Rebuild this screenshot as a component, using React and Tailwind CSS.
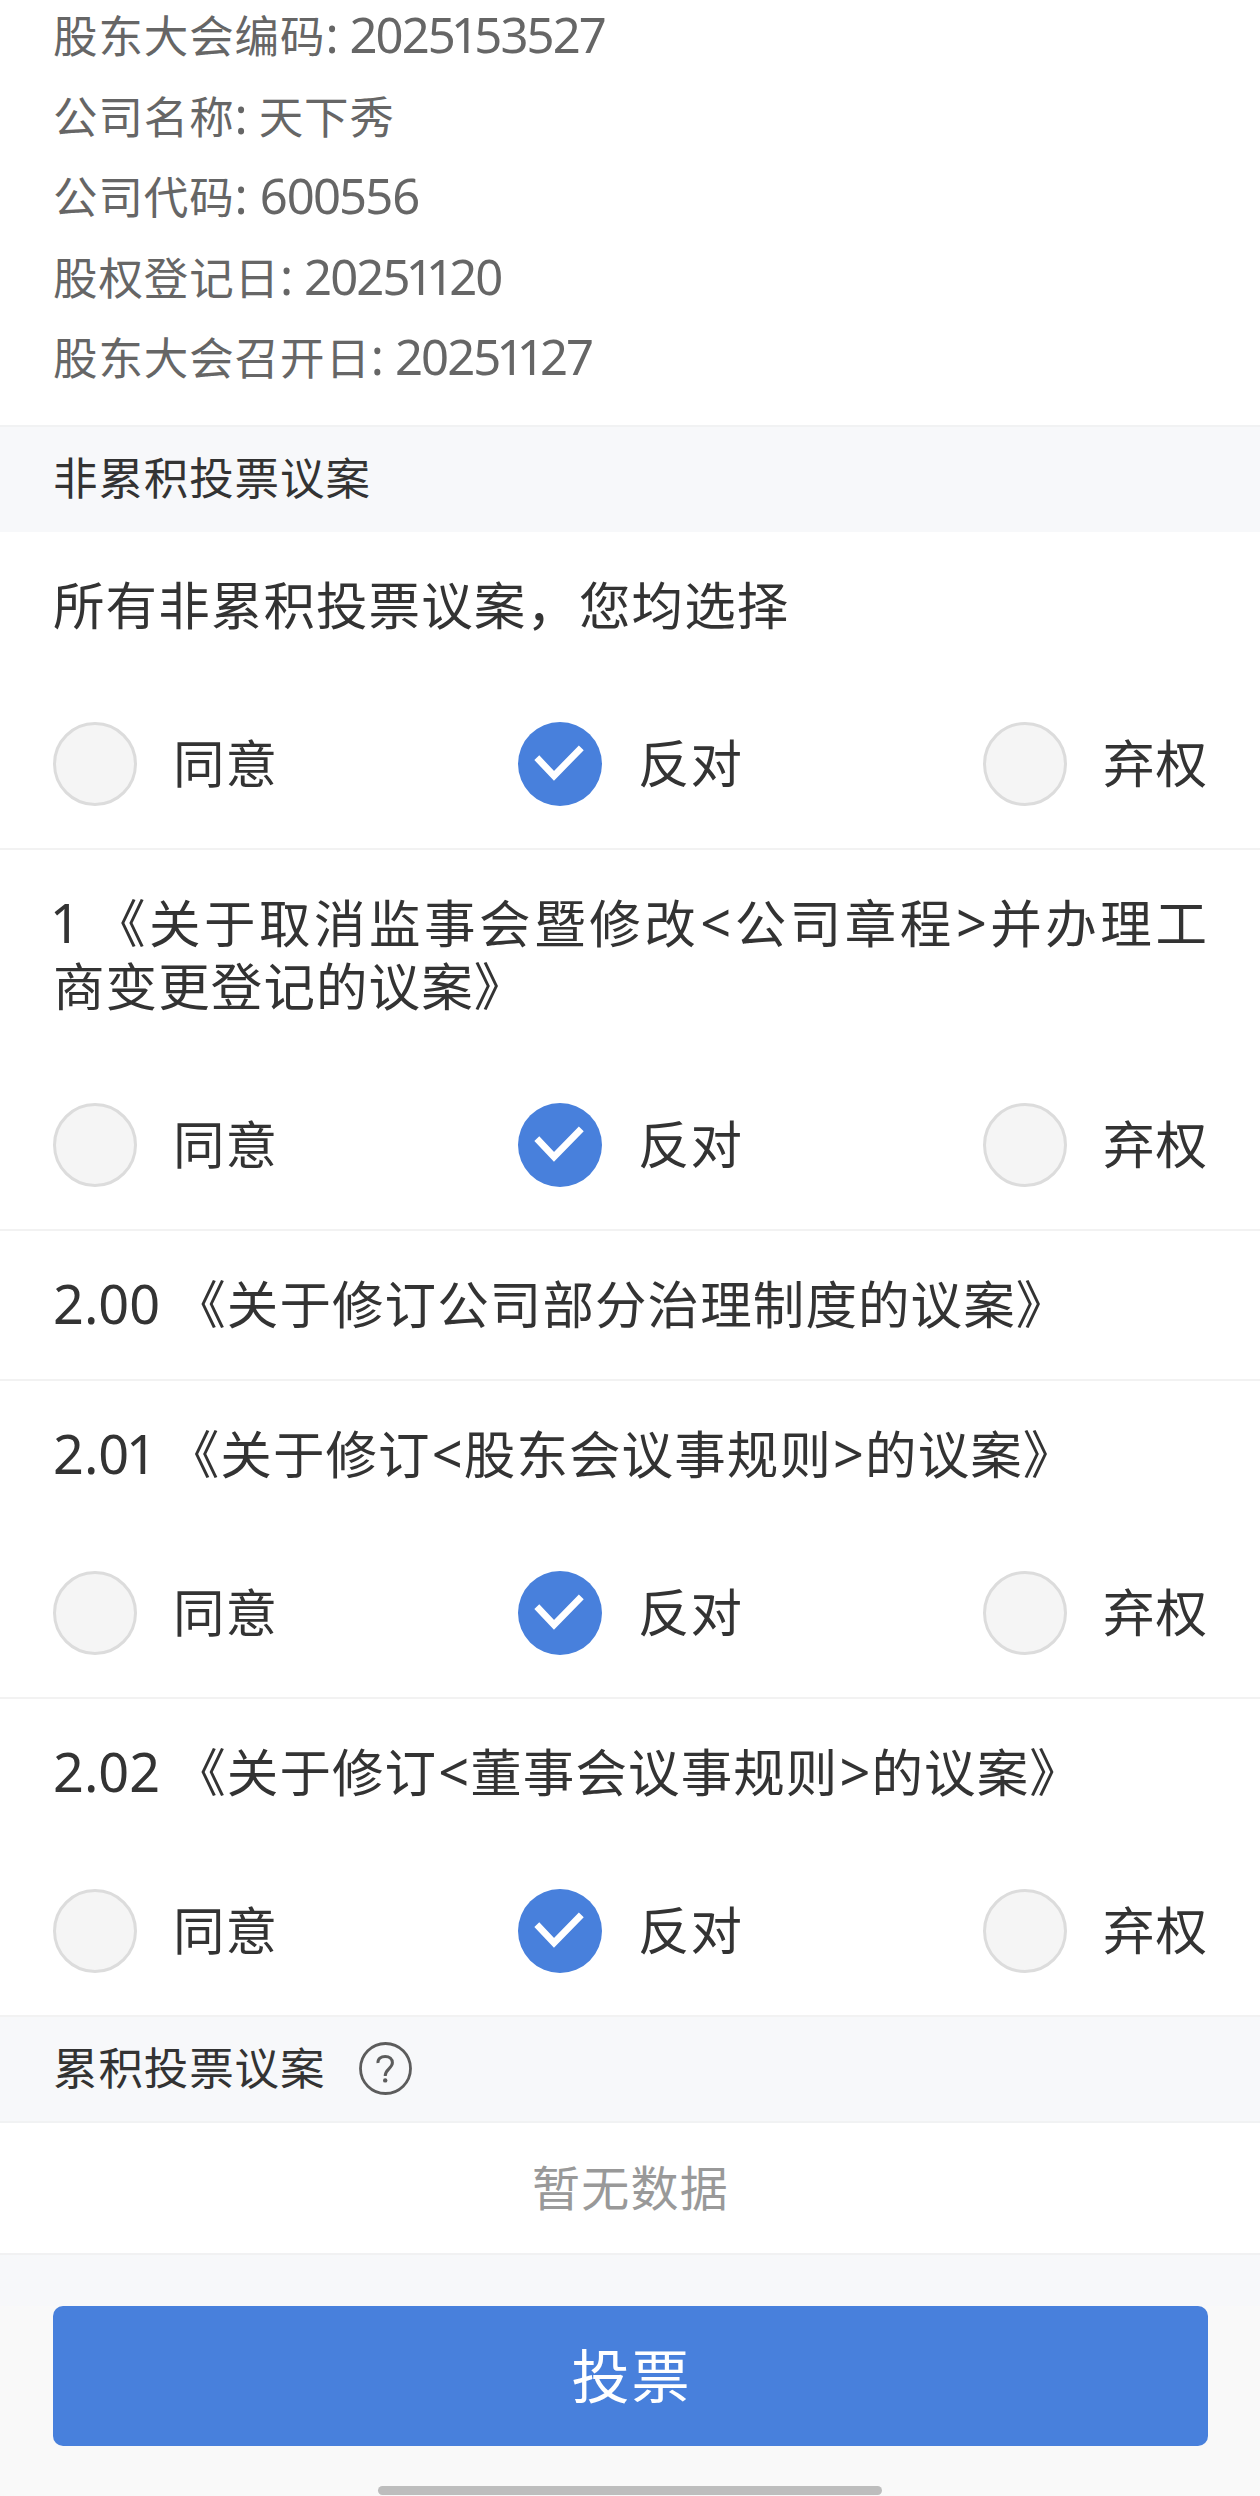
import React from "react";

const meetingInfo = [
  { label: "股东大会编码", value: "2025153527" },
  { label: "公司名称", value: "天下秀" },
  { label: "公司代码", value: "600556" },
  { label: "股权登记日", value: "20251120" },
  { label: "股东大会召开日", value: "20251127" },
];

// One entry in `lines` per printed line, every line but the last is justified
const proposals = [
  { id: "all", lines: ["所有非累积投票议案，您均选择"], choice: "反对" },
  {
    id: "1",
    lines: ["1 《关于取消监事会暨修改<公司章程>并办理工", "商变更登记的议案》"],
    choice: "反对",
  },
  { id: "2.00", lines: ["2.00 《关于修订公司部分治理制度的议案》"] },
  { id: "2.01", lines: ["2.01 《关于修订<股东会议事规则>的议案》"], choice: "反对" },
  { id: "2.02", lines: ["2.02 《关于修订<董事会议事规则>的议案》"], choice: "反对" },
];

const options = ["同意", "反对", "弃权"];

const charSpacing = {
  1: "-mx-[0.06em]",
  6: "mx-[0.02em]",
  "<": "mx-[0.02em]",
  ">": "mx-[0.02em]",
};

function MixedText({ text, latinClass }) {
  return text.split(/([\x20-\x7e]+)/).map((part, i) => {
    if (i % 2 === 0) return part;
    return (
      <span key={i} className={latinClass}>
        {part.split(/([16<>])/).map((s, j) =>
          charSpacing[s] ? (
            <span key={j} className={charSpacing[s]}>
              {s}
            </span>
          ) : (
            s
          )
        )}
      </span>
    );
  });
}

function Radio({ checked }) {
  if (!checked) {
    return (
      <span className="size-[84px] rounded-full border-3 border-[#dcdcdc] bg-[#f5f5f5]" />
    );
  }
  return (
    <svg viewBox="0 0 84 84" className="size-[84px]" fill="none">
      <circle cx="42" cy="42" r="42" fill="#4880dc" />
      <path d="M18.8 35.7L36 53.8L63.3 25.8" stroke="#fff" strokeWidth="6.8" />
    </svg>
  );
}

function Proposal({ lines, choice }) {
  return (
    <div className="border-b-2 border-[#f2f2f2] pt-[39px] pr-[52px] pl-[53px]">
      <div className="pb-[46px] text-[51.5px] leading-[63px] tracking-[1.1px]">
        {lines.map((line, i) => (
          <div
            key={line}
            className={
              i < lines.length - 1
                ? "h-[63px] [text-align-last:justify]"
                : "h-[63px] whitespace-nowrap"
            }
          >
            <MixedText
              text={line}
              latinClass="font-['Noto_Sans'] text-[54px] leading-none tracking-[0px]"
            />
          </div>
        ))}
      </div>
      {choice && (
        <div className="flex justify-between pt-[42px] pb-[42px]">
          {options.map((option) => (
            <div key={option} className="flex h-[84px] items-center gap-[36px]">
              <Radio checked={option === choice} />
              <span className="pb-[6px] text-[51.5px] leading-none tracking-[0.95px]">
                {option}
              </span>
            </div>
          ))}
        </div>
      )}
    </div>
  );
}

function HelpIcon() {
  return (
    <svg viewBox="0 0 53 53" className="mb-[2px] size-[53px]" fill="none">
      <circle cx="26.5" cy="26.5" r="25" stroke="#5c5c5c" strokeWidth="2.8" />
      <path
        d="M19 21C18.6 16.8 22 14.4 26.2 14.4S33.4 16.8 33.4 20.8C33.4 26.4 26.2 27 26.2 34"
        stroke="#5c5c5c"
        strokeWidth="3"
      />
      <circle cx="26.2" cy="38.4" r="2.2" fill="#5c5c5c" />
    </svg>
  );
}

function App() {
  return (
    <div className="flex h-[2496px] w-[1260px] flex-col overflow-hidden bg-white font-['Noto_Sans_CJK_SC',sans-serif] text-[#333]">
      <div className="h-[425px] shrink-0 px-[53px] text-[#666]">
        {meetingInfo.map(({ label, value }) => (
          <div
            key={label}
            className="h-[80.6px] text-[44.5px] leading-[67px] tracking-[0.9px] whitespace-nowrap"
          >
            <MixedText
              text={`${label}: ${value}`}
              latinClass="font-['Noto_Sans'] text-[49px] leading-none tracking-[-1.9px] [word-spacing:2px]"
            />
          </div>
        ))}
      </div>

      <div className="flex h-[107px] shrink-0 items-center border-t-2 border-[#f1f2f3] bg-[#f7f8fa] px-[53px] pb-[6px] text-[44.5px] tracking-[0.9px]">
        非累积投票议案
      </div>

      {proposals.map((p) => (
        <Proposal key={p.id} lines={p.lines} choice={p.choice} />
      ))}

      <div className="flex h-[106px] shrink-0 items-center gap-[34px] border-b-2 border-[#f1f2f3] bg-[#f7f8fa] px-[53px] text-[44.5px] tracking-[0.9px]">
        <span className="pb-[6px]">累积投票议案</span>
        <HelpIcon />
      </div>
      <div className="flex h-[132px] shrink-0 items-center justify-center border-b-2 border-[#f1f1f2] pb-[6px] pl-[1px] text-[48px] tracking-[1.2px] text-[#999]">
        暂无数据
      </div>
      <div className="h-[51px] shrink-0 bg-[#f7f8fa]" />

      {/* Bottom bar with the home indicator */}
      <div className="flex grow flex-col items-center bg-[#f9f9f9]">
        <button className="h-[140px] w-[1155px] rounded-[10px] bg-[#4880dc] pb-[6px] pl-[3px] text-[58px] leading-none tracking-[2px] text-white">
          投票
        </button>
        <div className="mt-[40px] h-[9px] w-[504px] rounded-full bg-[#bdbdbd]" />
      </div>
    </div>
  );
}

export default App;
